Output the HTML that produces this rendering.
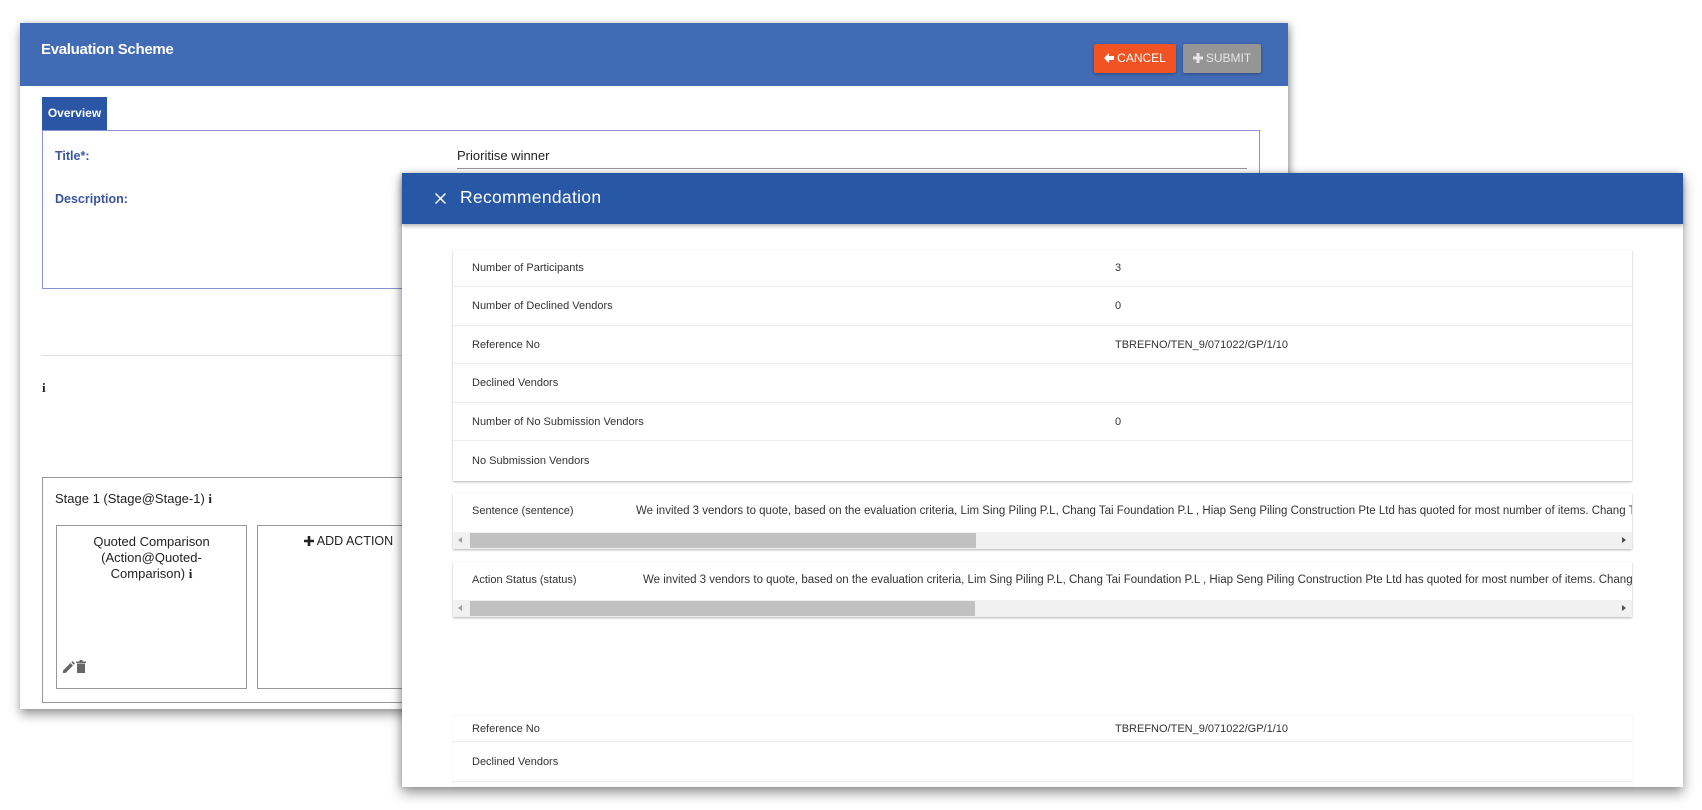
<!DOCTYPE html>
<html><head><meta charset="utf-8">
<style>
*{box-sizing:border-box;margin:0;padding:0}
body{width:1702px;height:810px;background:#fff;position:relative;overflow:hidden;font-family:"Liberation Sans",sans-serif}
.abs{position:absolute}
#panel{left:20px;top:23px;width:1268px;height:686px;background:#fff;box-shadow:0 6px 10px rgba(0,0,0,.35),2px 0 6px rgba(0,0,0,.2)}
#ph{left:0;top:0;width:1268px;height:63px;background:#416bb5}
.btn{top:21px;height:29px;color:#fff;font-size:12px;line-height:29px;text-align:center;border-radius:2px;box-shadow:0 1px 3px rgba(0,0,0,.3)}
.btn svg{vertical-align:-1px;margin-right:3px}
.lbl{color:#3b54a0;font-weight:bold;font-size:12.5px}
.row{position:absolute;left:0;width:1179px;border-bottom:1px solid #ececec;font-size:11px;color:#333}
.row span{position:absolute;top:50%;transform:translateY(-50%);white-space:nowrap}
.card{position:absolute;left:453px;width:1179px;background:#fff;box-shadow:0 1px 2px rgba(0,0,0,.3);overflow:hidden}
.sb{position:absolute;left:0;width:1179px;height:17px;background:#f1f1f1}
.th{position:absolute;left:17px;width:506px;top:1px;height:15px;background:#c1c1c1}
.la{position:absolute;left:5px;top:5px;width:0;height:0;border-top:3.5px solid transparent;border-bottom:3.5px solid transparent;border-right:4px solid #a0a0a0}
.ra{position:absolute;right:6px;top:5px;width:0;height:0;border-top:3.5px solid transparent;border-bottom:3.5px solid transparent;border-left:4px solid #505050}
.itext{position:absolute;top:17px;font-size:11.5px;color:#333;white-space:nowrap}
</style></head><body>

<div id="panel" class="abs">
  <div id="ph" class="abs">
    <div class="abs" style="left:21px;top:18px;color:#fff;font-weight:bold;font-size:15px;letter-spacing:-0.3px">Evaluation Scheme</div>
    <div class="abs btn" style="left:1074px;width:82px;background:#f15323"><svg width="10" height="10" viewBox="0 0 10 10"><path d="M0 5 L5 0 L5 3 L10 3 L10 7 L5 7 L5 10 Z" fill="#fff"/></svg>CANCEL</div>
    <div class="abs btn" style="left:1163px;width:78px;background:#959595;color:#e6e6e6"><svg width="10" height="10" viewBox="0 0 10 10"><path d="M3.5 0h3v3.5H10v3H6.5V10h-3V6.5H0v-3h3.5z" fill="#e6e6e6"/></svg>SUBMIT</div>
  </div>
  <div class="abs" style="left:22px;top:74px;width:65px;height:33px;background:#2a56a5;color:#fff;font-weight:bold;font-size:12px;line-height:33px;text-align:center">Overview</div>
  <div class="abs" style="left:22px;top:107px;width:1218px;height:159px;border:1px solid #8a93cf"></div>
  <div class="abs lbl" style="left:35px;top:126px">Title*:</div>
  <div class="abs lbl" style="left:35px;top:169px">Description:</div>
  <div class="abs" style="left:437px;top:125px;font-size:13px;color:#222">Prioritise winner</div>
  <div class="abs" style="left:437px;top:145px;width:790px;height:1px;background:#999"></div>
  <div class="abs" style="left:22px;top:332px;width:400px;height:1px;background:#ddd"></div>
  <div class="abs" style="left:22px;top:357px;font-family:'Liberation Serif',serif;font-weight:bold;font-size:13px;color:#222">i</div>
  <div class="abs" style="left:22px;top:454px;width:400px;height:226px;border:1px solid #999"></div>
  <div class="abs" style="left:35px;top:468px;font-size:13px;color:#222">Stage 1 (Stage@Stage-1) <b style="font-family:'Liberation Serif',serif">i</b></div>
  <div class="abs" style="left:36px;top:502px;width:191px;height:164px;border:1px solid #999;text-align:center;font-size:13px;line-height:16px;color:#222;padding-top:8px">Quoted Comparison<br>(Action@Quoted-<br>Comparison) <b style="font-family:'Liberation Serif',serif">i</b></div>
  <svg class="abs" style="left:43px;top:638px" width="12" height="12" viewBox="0 0 12 12"><path d="M0 12 L0 9.5 L7.5 2 L10 4.5 L2.5 12 Z M8.3 1.2 L9.5 0 L12 2.5 L10.8 3.7 Z" fill="#666"/></svg>
  <svg class="abs" style="left:56px;top:637px" width="10" height="13" viewBox="0 0 10 13"><path d="M0 1.5h10v1.5H0z M3.5 0h3v1.5h-3z M1 3.5h8V13H1z" fill="#666"/></svg>
  <div class="abs" style="left:237px;top:502px;width:200px;height:164px;border:1px solid #999;font-size:12.5px;color:#222;padding:8px 0 0 46px"><svg width="10" height="10" viewBox="0 0 10 10" style="vertical-align:-1px"><path d="M3.7 0h2.6v3.7H10v2.6H6.3V10H3.7V6.3H0V3.7h3.7z" fill="#222"/></svg> ADD ACTION</div>
</div>

<div class="abs" style="left:402px;top:173px;width:1281px;height:614px;background:#fff;box-shadow:0 6px 12px rgba(0,0,0,.4),-2px 0 6px rgba(0,0,0,.15)">
  <div class="abs" style="left:0;top:0;width:1281px;height:51px;background:#2757a5;box-shadow:0 2px 4px rgba(0,0,0,.3)">
    <svg class="abs" style="left:33px;top:20px" width="11" height="11" viewBox="0 0 11 11"><path d="M0.5 0.5L10.5 10.5M10.5 0.5L0.5 10.5" stroke="#fff" stroke-width="1.5"/></svg>
    <div class="abs" style="left:58px;top:14px;color:#fff;font-size:17.5px;letter-spacing:0.3px">Recommendation</div>
  </div>
</div>

<div class="card" style="top:250px;height:231px">
  <div class="row" style="top:0;height:37px"><span style="left:19px">Number of Participants</span><span style="left:662px">3</span></div>
  <div class="row" style="top:37px;height:39px"><span style="left:19px">Number of Declined Vendors</span><span style="left:662px">0</span></div>
  <div class="row" style="top:76px;height:38px"><span style="left:19px">Reference No</span><span style="left:662px">TBREFNO/TEN_9/071022/GP/1/10</span></div>
  <div class="row" style="top:114px;height:39px"><span style="left:19px">Declined Vendors</span></div>
  <div class="row" style="top:153px;height:38px"><span style="left:19px">Number of No Submission Vendors</span><span style="left:662px">0</span></div>
  <div class="row" style="top:191px;height:40px;border:0"><span style="left:19px">No Submission Vendors</span></div>
</div>

<div class="card" style="top:493px;height:56px">
  <div class="itext" style="left:19px;top:12px;font-size:11px">Sentence (sentence)</div>
  <div class="itext" style="left:183px;top:12px">We invited 3 vendors to quote, based on the evaluation criteria, Lim Sing Piling P.L, Chang Tai Foundation P.L , Hiap Seng Piling Construction Pte Ltd has quoted for most number of items. Chang Tai Foundation P.L</div>
  <div class="sb" style="top:39px"><div class="la"></div><div class="th"></div><div class="ra"></div></div>
</div>

<div class="card" style="top:562px;height:55px">
  <div class="itext" style="left:19px;top:12px;font-size:11px">Action Status (status)</div>
  <div class="itext" style="left:190px;top:12px">We invited 3 vendors to quote, based on the evaluation criteria, Lim Sing Piling P.L, Chang Tai Foundation P.L , Hiap Seng Piling Construction Pte Ltd has quoted for most number of items. Chang Tai Foundation P.L</div>
  <div class="sb" style="top:38px"><div class="la"></div><div class="th" style="width:505px"></div><div class="ra"></div></div>
</div>

<div class="card" style="top:716px;height:71px;box-shadow:0 0 1px rgba(0,0,0,.15)">
  <div class="row" style="top:0;height:26px"><span style="left:19px">Reference No</span><span style="left:662px">TBREFNO/TEN_9/071022/GP/1/10</span></div>
  <div class="row" style="top:26px;height:40px"><span style="left:19px">Declined Vendors</span></div>
</div>

</body></html>
